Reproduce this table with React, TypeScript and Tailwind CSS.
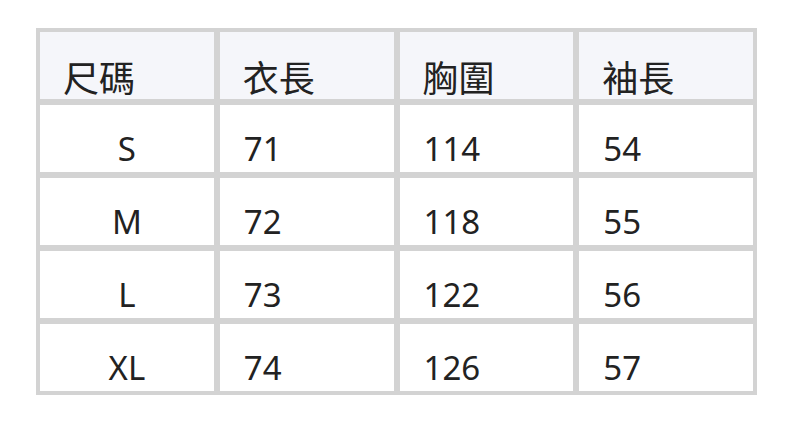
const head = ["尺碼", "衣長", "胸圍", "袖長"];
const rows = [
  ["S", "71", "114", "54"],
  ["M", "72", "118", "55"],
  ["L", "73", "122", "56"],
  ["XL", "74", "126", "57"],
];

export default function App() {
  return (
    <div
      className="min-h-screen bg-white pt-[28px] pl-[36px]"
      style={{ fontFamily: '"Noto Sans", "Noto Sans CJK TC", sans-serif' }}
    >
      <div className="grid w-[721px] grid-cols-4 gap-[6px] bg-[#d3d3d3] p-[4px] text-[#222222]">
        {head.map((h) => (
          <div key={h} className="flex h-[67px] items-end bg-[#f5f6fa] pl-[23px] text-[36px] leading-[40px]">
            {h}
          </div>
        ))}
        {rows.map((r) =>
          r.map((c, i) => (
            <div
              key={r[0] + i}
              className={`flex h-[67px] items-end bg-white text-[33px] leading-[46px] ${
                i === 0 ? "justify-center" : "pl-[24px]"
              }`}
            >
              {c}
            </div>
          ))
        )}
      </div>
    </div>
  );
}
